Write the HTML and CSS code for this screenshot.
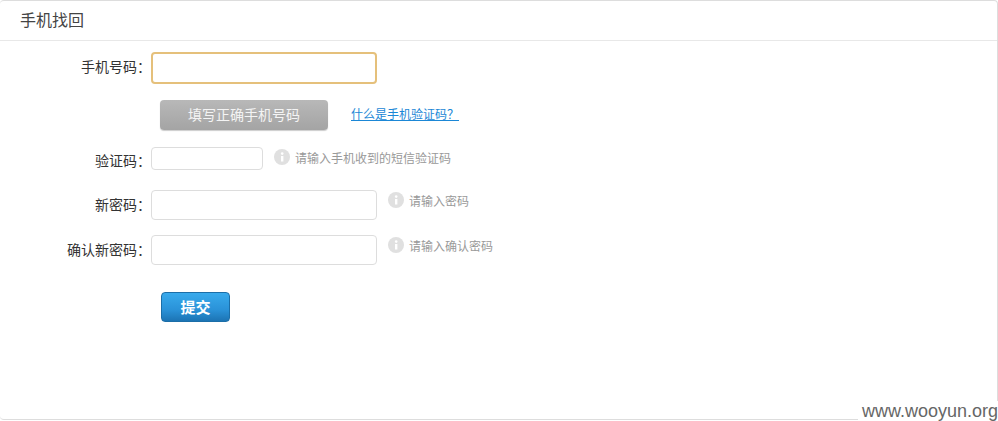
FILE: index.html
```html
<!DOCTYPE html>
<html lang="zh-CN">
<head>
  <meta charset="UTF-8">
  <title>手机找回</title>
  <link rel="stylesheet" href="styles.css">
</head>
<body>

<div class="panel">
  <div class="panel-title">手机找回</div>
  <form class="form">
    <div class="row row-phone">
      <label class="label">手机号码：</label>
      <input type="text" class="input input-focus">
    </div>
    <div class="row row-send">
      <button type="button" class="btn-send">填写正确手机号码</button>
      <a href="#" class="help-link">什么是手机验证码？</a>
    </div>
    <div class="row row-code">
      <label class="label">验证码：</label>
      <input type="text" class="input input-short">
      <span class="tip">
        <svg class="tip-icon" viewBox="0 0 16 16"><circle cx="8" cy="8" r="8" fill="#e0e0e0"/><rect x="7" y="7" width="2.4" height="5.5" fill="#fff"/><circle cx="8.2" cy="4.6" r="1.3" fill="#fff"/></svg>
        请输入手机收到的短信验证码
      </span>
    </div>
    <div class="row row-pass">
      <label class="label">新密码：</label>
      <input type="password" class="input">
      <span class="tip">
        <svg class="tip-icon" viewBox="0 0 16 16"><circle cx="8" cy="8" r="8" fill="#e0e0e0"/><rect x="7" y="7" width="2.4" height="5.5" fill="#fff"/><circle cx="8.2" cy="4.6" r="1.3" fill="#fff"/></svg>
        请输入密码
      </span>
    </div>
    <div class="row row-pass">
      <label class="label">确认新密码：</label>
      <input type="password" class="input">
      <span class="tip">
        <svg class="tip-icon" viewBox="0 0 16 16"><circle cx="8" cy="8" r="8" fill="#e0e0e0"/><rect x="7" y="7" width="2.4" height="5.5" fill="#fff"/><circle cx="8.2" cy="4.6" r="1.3" fill="#fff"/></svg>
        请输入确认密码
      </span>
    </div>
    <div class="row row-submit">
      <button type="button" class="btn-submit">提交</button>
    </div>
  </form>
</div>

<div class="watermark">www.wooyun.org</div>

</body>
</html>
```

FILE: styles.css
```css
html, body {
  margin: 0;
  height: 421px;
  overflow: hidden;
  background: #fff;
}

body {
  font-family: "Liberation Sans", "Noto Sans CJK SC", sans-serif;
  font-size: 14px;
  color: #333;
}

.panel {
  box-sizing: border-box;
  width: 998px;
  height: 420px;
  border: 1px solid #ddd;
  border-left: none;
  border-radius: 4px;
}

.panel-title {
  box-sizing: border-box;
  height: 40px;
  padding: 10px 0 0 20px;
  font-size: 16px;
  line-height: 20px;
  color: #444;
  border-bottom: 1px solid #e8e8e8;
}

.form {
  padding-top: 11px;
}

.row {
  display: flex;
  align-items: flex-start;
}

.label {
  width: 151px;
  flex: none;
  text-align: right;
  line-height: 30px;
}

.input {
  box-sizing: border-box;
  width: 226px;
  height: 30px;
  padding: 0 6px;
  border: 1px solid #ddd;
  border-radius: 4px;
  background: #fff;
  outline: none;
}

.input-focus {
  height: 32px;
  border: 2px solid #e5c07b;
}

.input-short {
  width: 112px;
  height: 23px;
}

.row-send {
  margin-top: 16px;
  padding-left: 160px;
  align-items: center;
}

.btn-send {
  width: 168px;
  height: 30px;
  padding: 0 0 2px;
  border: none;
  border-radius: 4px;
  background: linear-gradient(#b8b8b8, #a4a4a4);
  box-shadow: 0 1px 1px #ccc;
  color: #f4f4f4;
  font: 14px "Liberation Sans", "Noto Sans CJK SC", sans-serif;
}

.help-link {
  margin-left: 23px;
  margin-top: -3px;
  color: #1b87d6;
  font-size: 12px;
}

.row-code {
  margin-top: 17px;
}

.row-code .label {
  line-height: 28px;
}

.row-pass {
  margin-top: 15px;
}

.tip {
  display: flex;
  align-items: center;
  gap: 5px;
  margin-left: 11px;
  height: 20px;
  font-size: 12px;
  color: #999;
}

.tip-icon {
  width: 16px;
  height: 16px;
}

.row-submit {
  margin-top: 27px;
  padding-left: 161px;
}

.btn-submit {
  width: 69px;
  height: 30px;
  padding: 0 0 2px;
  border: 1px solid #1b6ea8;
  border-radius: 4px;
  background: linear-gradient(#38aaec 0%, #2a92d8 60%, #1c74b4 100%);
  color: #fff;
  font: bold 15px "Liberation Sans", "Noto Sans CJK SC", sans-serif;
}

/* site stamp over the corner */
.watermark {
  position: absolute;
  right: 0;
  bottom: 0;
  padding-left: 4px;
  background: #fff;
  font-size: 18px;
  line-height: 20px;
  color: #666;
}
```
